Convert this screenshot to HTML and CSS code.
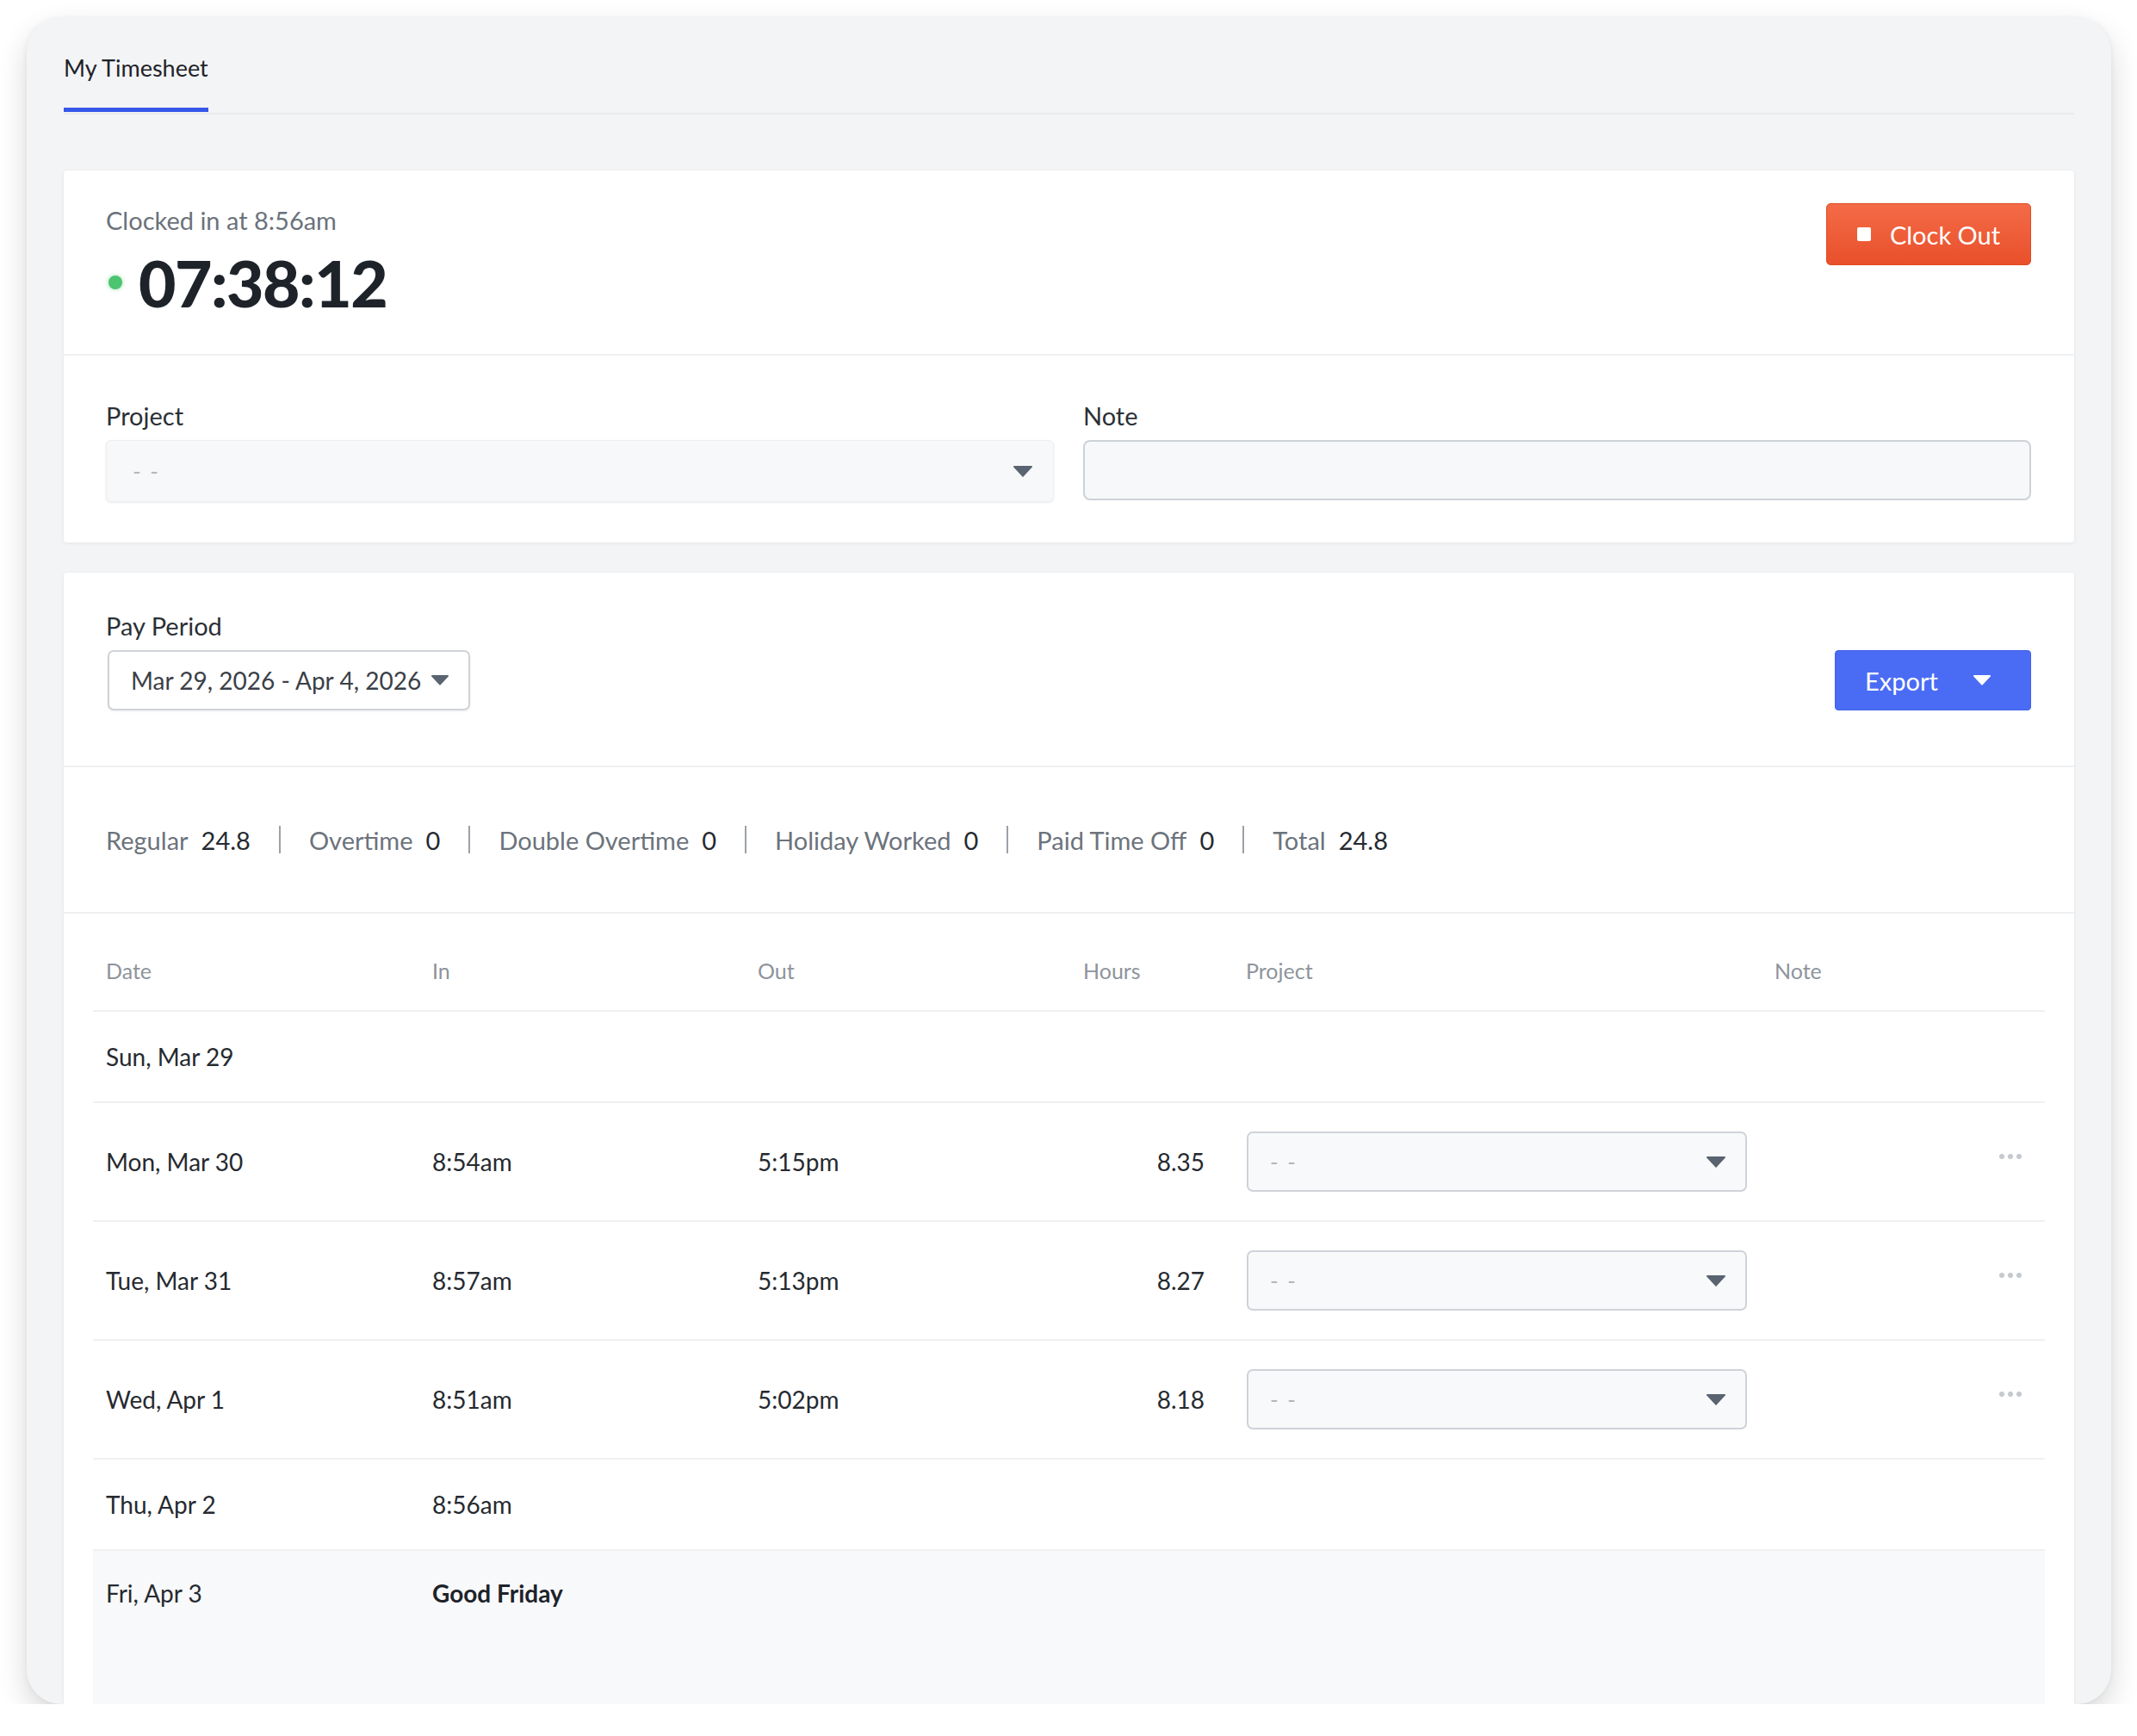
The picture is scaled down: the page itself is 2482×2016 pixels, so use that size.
FILE: index.html
```html
<!DOCTYPE html>
<html lang="en">
<head>
    <meta charset="UTF-8">
    <meta name="viewport" content="width=device-width, initial-scale=1.0">
    <title>My Timesheet</title>
    <link rel="stylesheet" href="styles.css">
</head>
<body>
    <div class="window">
        <div class="tabs">
            <span class="tab">My Timesheet</span>
        </div>

        <!-- Clock card -->
        <div class="card clock-card">
            <div class="clock-top">
                <div>
                    <div class="clocked-in">Clocked in at 8:56am</div>
                    <div class="timer">
                        <span class="dot"></span>
                        <span class="timer-value">07:38:12</span>
                    </div>
                </div>
                <button type="button" class="btn-clockout">
                    <span class="stop-icon"></span>
                    Clock Out
                </button>
            </div>
            <div class="clock-fields">
                <div>
                    <div class="field-label">Project</div>
                    <div class="select select-soft">
                        <span class="placeholder">- -</span>
                        <svg class="caret" viewBox="0 0 22 13"><path d="M1 0h20a1 1 0 0 1 .8 1.6l-10 10.6a1 1 0 0 1-1.6 0L.2 1.6A1 1 0 0 1 1 0z" fill="currentColor"/></svg>
                    </div>
                </div>
                <div>
                    <div class="field-label">Note</div>
                    <div class="note-input"></div>
                </div>
            </div>
        </div>

        <!-- Pay period card -->
        <div class="card period-card">
            <div class="period-top">
                <div>
                    <div class="field-label">Pay Period</div>
                    <div class="period-select">
                        <span>Mar 29, 2026 - Apr 4, 2026</span>
                        <svg class="caret caret-sm" viewBox="0 0 22 13"><path d="M1 0h20a1 1 0 0 1 .8 1.6l-10 10.6a1 1 0 0 1-1.6 0L.2 1.6A1 1 0 0 1 1 0z" fill="currentColor"/></svg>
                    </div>
                </div>
                <button type="button" class="btn-export">
                    <span>Export</span>
                    <svg class="caret caret-sm" viewBox="0 0 22 13"><path d="M1 0h20a1 1 0 0 1 .8 1.6l-10 10.6a1 1 0 0 1-1.6 0L.2 1.6A1 1 0 0 1 1 0z" fill="currentColor"/></svg>
                </button>
            </div>

            <div class="stats">
                <span class="stat-label">Regular</span><span class="stat-value">24.8</span>
                <span class="stat-sep"></span>
                <span class="stat-label">Overtime</span><span class="stat-value">0</span>
                <span class="stat-sep"></span>
                <span class="stat-label">Double Overtime</span><span class="stat-value">0</span>
                <span class="stat-sep"></span>
                <span class="stat-label">Holiday Worked</span><span class="stat-value">0</span>
                <span class="stat-sep"></span>
                <span class="stat-label">Paid Time Off</span><span class="stat-value">0</span>
                <span class="stat-sep"></span>
                <span class="stat-label">Total</span><span class="stat-value">24.8</span>
            </div>

            <div class="table">
                <div class="row row-head">
                    <div>Date</div>
                    <div>In</div>
                    <div>Out</div>
                    <div>Hours</div>
                    <div>Project</div>
                    <div class="note-head">Note</div>
                </div>

                <div class="row row-day">
                    <div>Sun, Mar 29</div>
                    <div></div><div></div><div></div><div></div><div></div>
                </div>

                <div class="row row-entry">
                    <div>Mon, Mar 30</div>
                    <div>8:54am</div>
                    <div>5:15pm</div>
                    <div class="hours">8.35</div>
                    <div class="project-cell">
                        <div class="select row-select">
                            <span class="placeholder">- -</span>
                            <svg class="caret" viewBox="0 0 22 13"><path d="M1 0h20a1 1 0 0 1 .8 1.6l-10 10.6a1 1 0 0 1-1.6 0L.2 1.6A1 1 0 0 1 1 0z" fill="currentColor"/></svg>
                        </div>
                    </div>
                    <div class="note-cell"><span class="more"><i></i><i></i><i></i></span></div>
                </div>

                <div class="row row-entry">
                    <div>Tue, Mar 31</div>
                    <div>8:57am</div>
                    <div>5:13pm</div>
                    <div class="hours">8.27</div>
                    <div class="project-cell">
                        <div class="select row-select">
                            <span class="placeholder">- -</span>
                            <svg class="caret" viewBox="0 0 22 13"><path d="M1 0h20a1 1 0 0 1 .8 1.6l-10 10.6a1 1 0 0 1-1.6 0L.2 1.6A1 1 0 0 1 1 0z" fill="currentColor"/></svg>
                        </div>
                    </div>
                    <div class="note-cell"><span class="more"><i></i><i></i><i></i></span></div>
                </div>

                <div class="row row-entry">
                    <div>Wed, Apr 1</div>
                    <div>8:51am</div>
                    <div>5:02pm</div>
                    <div class="hours">8.18</div>
                    <div class="project-cell">
                        <div class="select row-select">
                            <span class="placeholder">- -</span>
                            <svg class="caret" viewBox="0 0 22 13"><path d="M1 0h20a1 1 0 0 1 .8 1.6l-10 10.6a1 1 0 0 1-1.6 0L.2 1.6A1 1 0 0 1 1 0z" fill="currentColor"/></svg>
                        </div>
                    </div>
                    <div class="note-cell"><span class="more"><i></i><i></i><i></i></span></div>
                </div>

                <div class="row row-day">
                    <div>Thu, Apr 2</div>
                    <div>8:56am</div>
                    <div></div><div></div><div></div><div></div>
                </div>

                <div class="row row-holiday">
                    <div>Fri, Apr 3</div>
                    <div class="holiday-name">Good Friday</div>
                    <div></div><div></div><div></div><div></div>
                </div>
            </div>
        </div>
    </div>
</body>
</html>
```

FILE: styles.css
```css
* {
    box-sizing: border-box;
}

body {
    margin: 0;
    background-color: #ffffff;
    font-family: "Lato", "Liberation Sans", Arial, sans-serif;
    color: #262a30;
}

.window {
    width: 2421px;
    height: 1958px;
    margin: 21px 0 0 31px;
    padding: 0 43px;
    background-color: #f3f4f6;
    border-radius: 40px;
    box-shadow: 0 14px 34px rgba(0, 0, 0, 0.16), 0 0 6px rgba(0, 0, 0, 0.05);
    overflow: hidden;
}

/* Tabs */
.tabs {
    border-bottom: 2px solid #e7e9ec;
    padding-bottom: 1px;
}

.tab {
    display: inline-block;
    padding: 40px 0 28px;
    font-size: 27px;
    line-height: 36px;
    color: #1f2328;
    border-bottom: 5px solid #3657e8;
}

/* Cards */
.card {
    background-color: #ffffff;
    border-radius: 4px;
    box-shadow: 0 1px 4px rgba(0, 0, 0, 0.07);
}

.clock-card {
    margin-top: 65px;
}

.clock-top {
    display: flex;
    justify-content: space-between;
    align-items: flex-start;
    height: 215px;
    padding: 40px 50px 0 49px;
    border-bottom: 2px solid #eef0f2;
}

.clocked-in {
    font-size: 29px;
    line-height: 36px;
    color: #6b727b;
}

.timer {
    display: flex;
    align-items: center;
    margin-top: 14px;
}

.dot {
    width: 16px;
    height: 16px;
    margin: 0 19px 0 3px;
    border-radius: 50%;
    background-color: #4cc470;
    box-shadow: 0 0 5px rgba(76, 196, 112, 0.55);
}

.timer-value {
    font-size: 75px;
    font-weight: 900;
    line-height: 80px;
    letter-spacing: -1.5px;
    color: #1e232a;
}

.btn-clockout {
    display: flex;
    align-items: center;
    justify-content: center;
    gap: 22px;
    width: 238px;
    height: 72px;
    margin-top: -2px;
    padding: 0;
    background: linear-gradient(#f46b47, #e8502b);
    border: 1px solid #e04a25;
    border-radius: 5px;
    font-family: inherit;
    font-size: 29px;
    color: #ffffff;
    cursor: pointer;
}

.stop-icon {
    width: 16px;
    height: 16px;
    background-color: #ffffff;
    border-radius: 2px;
}

.clock-fields {
    display: grid;
    grid-template-columns: 1fr 1fr;
    gap: 34px;
    padding: 52px 50px 47px 49px;
}

.field-label {
    font-size: 29px;
    line-height: 36px;
    color: #2b3036;
    margin-bottom: 10px;
}

.select {
    display: flex;
    align-items: center;
    justify-content: space-between;
    height: 72px;
    padding: 0 24px 0 30px;
    border-radius: 6px;
    background-color: #f7f8f9;
}

.select-soft {
    border: 1px solid #eceef1;
    box-shadow: 0 1px 3px rgba(0, 0, 0, 0.08);
}

.placeholder {
    font-size: 26px;
    letter-spacing: 2px;
    color: #b3b8be;
}

.caret {
    width: 22px;
    height: 13px;
    color: #5a6470;
}

.caret-sm {
    width: 20px;
    height: 12px;
}

.note-input {
    height: 70px;
    border: 2px solid #cdd2d7;
    border-radius: 8px;
    background-color: #f7f8fa;
}

/* Pay period */
.period-card {
    margin-top: 35px;
    min-height: 1400px;
}

.period-top {
    display: flex;
    justify-content: space-between;
    align-items: flex-end;
    padding: 44px 50px 64px 49px;
    border-bottom: 2px solid #eef0f2;
}

.period-select {
    display: flex;
    align-items: center;
    justify-content: space-between;
    width: 421px;
    height: 70px;
    margin-left: 2px;
    padding: 0 23px 0 25px;
    border: 2px solid #cfd3d8;
    border-radius: 7px;
    background-color: #ffffff;
    box-shadow: 0 1px 3px rgba(0, 0, 0, 0.08);
    font-size: 28px;
    color: #3b4047;
    white-space: nowrap;
}

.btn-export {
    display: flex;
    align-items: center;
    justify-content: space-between;
    width: 228px;
    height: 70px;
    padding: 0 46px 0 34px;
    background-color: #4a6cf5;
    border: 1px solid #3f60ea;
    border-radius: 4px;
    font-family: inherit;
    font-size: 29px;
    color: #ffffff;
    cursor: pointer;
}

.btn-export .caret {
    color: #ffffff;
}

/* Stats */
.stats {
    display: flex;
    align-items: center;
    height: 170px;
    padding: 0 49px;
    border-bottom: 2px solid #eef0f2;
    font-size: 29px;
}

.stat-label {
    color: #6c737c;
}

.stat-value {
    margin-left: 15px;
    color: #262a30;
}

.stat-sep {
    width: 2px;
    height: 32px;
    margin: 0 33px;
    background-color: #9ca1a8;
}

/* Table */
.table {
    margin: 0 34px;
    font-size: 28px;
}

.row {
    display: grid;
    grid-template-columns: 379px 378px 378px 189px 614px 1fr;
    align-items: center;
    border-bottom: 2px solid #eef0f2;
}

.row > div {
    padding: 0 15px;
    line-height: 36px;
}

.row-head {
    padding: 48px 0 28px;
    font-size: 25px;
    color: #8e949b;
}

.row-day {
    height: 106px;
}

.row-entry {
    height: 138px;
}

.row-holiday {
    height: 320px;
    align-items: start;
    padding-top: 31px;
    background-color: #f8f9fa;
    border-bottom: none;
}

.holiday-name {
    font-weight: 700;
    color: #1e232a;
}

.row > .hours {
    text-align: right;
    padding-right: 33px;
}

.row > .project-cell {
    padding: 0 17px 0 16px;
}

.row-select {
    height: 70px;
    padding: 0 23px 0 25px;
    border: 2px solid #cfd3d8;
    border-radius: 7px;
    background-color: #f8f9fb;
}

.row > .note-cell {
    display: flex;
    justify-content: flex-end;
    padding-right: 27px;
}

.more {
    display: flex;
    gap: 4px;
    margin-bottom: 12px;
}

.more i {
    width: 6px;
    height: 6px;
    border-radius: 50%;
    background-color: #c5c9ce;
}
```
